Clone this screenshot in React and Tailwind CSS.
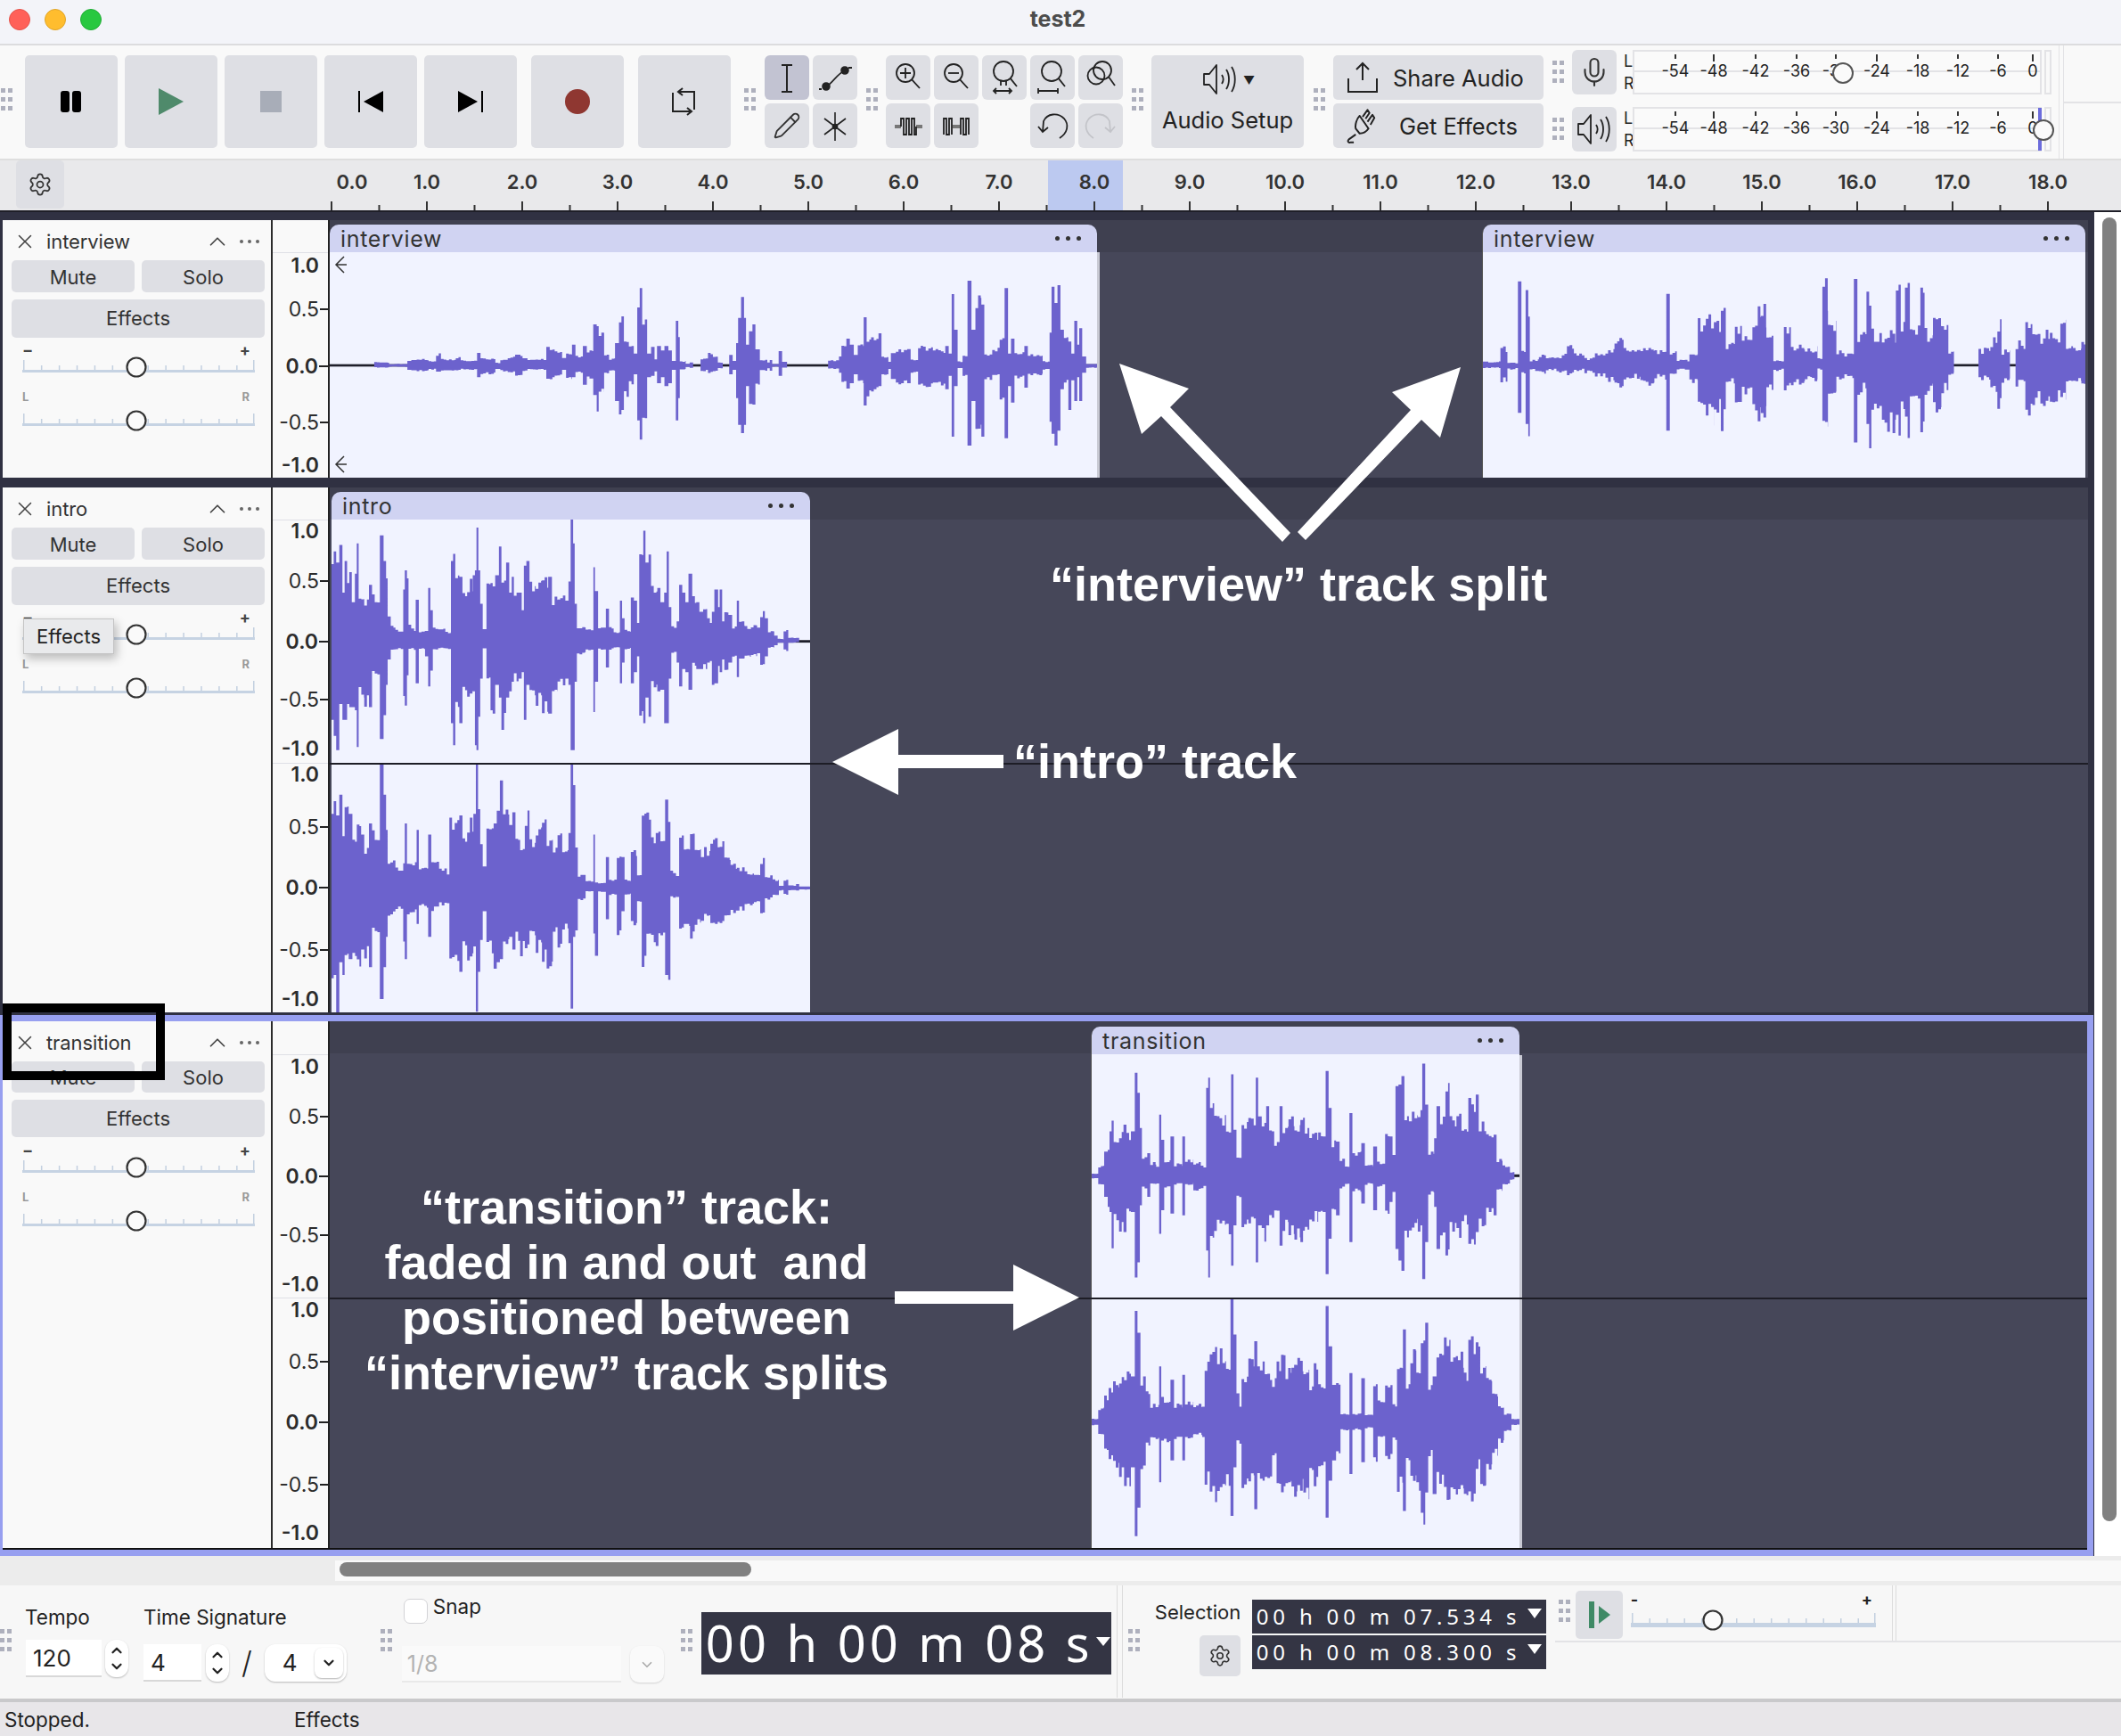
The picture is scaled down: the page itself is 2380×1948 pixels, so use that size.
import { X, ChevronUp, ChevronDown, Settings, Mic, Pencil } from "lucide-react";

// peaks are "x,top,bottom" per step, in the coordinates of the channel's viewBox
const WAVE_INTERVIEW_A = `0,358,362 90,348,368 120,355,365 157,345,375 165,338,380 200,345,375 215,318,385 225,338,378 255,330,378 265,343,375 298,318,400 305,335,390 335,350,372 345,340,380 360,330,385 375,320,395 390,335,380 400,338,375 438,298,405 445,295,408 455,310,395 470,335,375 478,315,410 490,290,400 497,325,385 512,295,425 520,305,405 533,222,460 540,228,515 544,240,460 555,320,390 565,335,380 577,285,480 585,215,525 590,195,510 595,260,470 605,290,430 615,320,390 622,165,545 627,100,610 632,180,545 642,320,400 650,298,395 657,340,380 662,295,420 670,310,400 677,295,430 685,310,420 692,345,375 700,210,545 705,265,470 708,345,375 720,355,365 728,350,368 735,358,362 750,335,380 765,318,388 775,330,380 785,350,370 795,358,362 808,325,390 815,345,375 822,285,470 826,200,560 832,130,588 838,200,560 842,290,430 848,245,490 855,222,492 861,300,425 870,340,378 885,350,370 890,342,378 895,355,365 908,312,395 915,345,368 925,358,362 1008,342,372 1030,330,385 1035,285,420 1045,270,438 1052,290,420 1060,325,390 1068,280,420 1080,198,495 1086,270,465 1095,255,450 1110,252,430 1116,330,395 1130,348,372 1135,310,410 1145,305,425 1168,305,420 1175,340,385 1190,288,425 1200,295,438 1220,305,430 1245,295,440 1252,320,395 1258,120,600 1263,240,430 1270,345,370 1280,325,400 1290,75,630 1298,240,480 1306,115,610 1318,155,600 1324,320,410 1340,300,395 1355,250,490 1365,100,605 1372,320,430 1378,270,485 1385,315,405 1405,295,435 1412,320,395 1430,320,395 1442,345,375 1456,250,550 1460,95,590 1466,150,630 1472,90,580 1478,240,440 1485,265,420 1494,280,510 1500,320,410 1506,210,480 1512,290,400 1516,235,480 1522,330,385 1530,355,368`;

const WAVE_INTERVIEW_B = `655,525,550 680,470,598 690,530,555 705,258,700 710,490,570 716,285,795 722,520,560 735,495,570 745,510,560 760,500,565 775,470,575 785,500,560 800,510,570 815,495,580 830,485,600 843,450,620 850,410,645 856,478,590 880,480,610 900,485,590 917,300,760 922,490,570 932,520,555 950,490,620 962,360,745 985,380,700 995,300,765 1002,460,610 1015,390,680 1025,430,650 1040,335,745 1052,325,730 1060,440,650 1070,520,560 1085,405,640 1095,465,610 1115,480,590 1125,470,600 1133,515,555 1140,225,835 1148,390,640 1160,490,590 1185,250,800 1190,420,640 1203,258,825 1210,415,690 1225,420,780 1245,250,820 1252,350,690 1258,235,790 1265,390,660 1280,235,825 1286,410,640 1298,355,710 1310,400,640 1320,490,580 1328,536,544 1363,480,590 1380,440,640 1390,355,705 1396,480,600 1408,536,544 1416,455,620 1430,345,730 1440,420,680 1465,420,665 1480,385,670 1488,460,600 1498,480,610 1510,460,625`;

const WAVE_INTRO_L = `5,150,640 12,110,690 20,145,735 30,90,590 40,240,640 47,140,640 55,210,590 62,175,600 70,270,600 80,180,610 86,85,725 92,230,580 110,260,600 125,215,600 135,240,515 160,60,700 172,140,625 180,195,530 185,315,450 195,340,420 210,355,420 235,230,565 240,170,595 247,195,500 252,340,420 270,360,420 275,262,525 285,360,420 305,360,440 315,225,535 322,295,485 330,345,420 355,345,415 370,360,420 388,140,650 395,118,720 402,160,620 415,190,650 425,215,575 440,195,575 458,185,550 465,170,720 470,35,735 476,170,630 482,275,510 490,355,415 502,200,540 515,210,610 522,220,620 530,185,530 542,95,570 550,150,675 565,145,570 575,240,550 583,190,520 590,230,520 605,240,510 615,295,490 622,155,640 630,140,530 640,200,590 660,195,600 680,180,620 700,190,620 712,245,560 730,240,540 755,265,510 765,205,530 772,10,735 780,85,735 785,275,520 792,340,435 820,355,425 845,160,615 850,235,520 860,345,420 885,290,475 895,345,420 910,360,415 930,265,525 937,320,460 945,355,420 965,255,525 975,265,490 985,335,440 992,110,635 1005,45,650 1012,145,570 1022,120,630 1030,210,540 1050,225,550 1060,270,545 1072,240,650 1080,110,650 1087,285,510 1095,340,430 1112,330,460 1120,215,535 1130,240,480 1140,270,490 1150,180,545 1162,235,480 1175,270,480 1185,300,480 1197,265,480 1210,320,460 1225,300,530 1233,230,525 1245,285,470 1250,230,490 1258,330,450 1265,290,490 1278,310,460 1290,340,450 1305,265,505 1312,330,450 1330,345,445 1350,335,440 1370,350,430 1380,295,480 1395,320,440 1405,360,415 1425,375,405 1436,385,398 1455,355,425 1470,380,398 1495,382,395 1505,390,394`;

const WAVE_INTRO_R = `5,935,1450 12,895,1440 20,940,1557 30,875,1400 40,1005,1440 47,905,1400 60,935,1390 72,1015,1390 86,950,1415 100,1000,1360 110,1040,1390 125,965,1415 135,980,1330 160,780,1515 172,875,1415 180,985,1320 185,1070,1255 210,1100,1240 235,1090,1335 240,965,1390 247,1080,1250 278,985,1280 285,1100,1230 315,1000,1320 325,1070,1240 350,1100,1225 375,1125,1215 383,940,1400 400,920,1435 415,940,1430 425,985,1380 440,945,1405 460,935,1350 468,780,1555 475,920,1430 482,1030,1330 490,1100,1240 502,970,1380 525,965,1420 535,925,1400 545,830,1390 555,895,1370 575,970,1320 585,930,1360 595,975,1340 610,1015,1385 625,915,1385 640,1010,1340 660,970,1375 680,940,1400 695,995,1435 715,1040,1310 730,975,1385 745,1040,1310 765,995,1340 772,780,1545 780,845,1320 787,1040,1300 795,1125,1210 820,1145,1180 845,1000,1310 850,1150,1380 860,1150,1180 885,1070,1265 895,1140,1190 920,1045,1320 935,1070,1240 945,1140,1190 965,1045,1300 985,1125,1210 1000,930,1425 1015,910,1320 1030,1000,1340 1045,970,1350 1060,1015,1350 1075,890,1440 1085,960,1455 1092,1110,1200 1110,1130,1195 1120,1000,1310 1135,1020,1290 1155,960,1330 1170,1015,1290 1190,1070,1270 1200,1035,1260 1220,1015,1300 1235,1000,1300 1250,1020,1280 1265,1060,1260 1285,1090,1250 1305,1100,1240 1330,1115,1225 1360,1120,1215 1380,1070,1260 1395,1125,1205 1420,1140,1190 1440,1160,1175 1455,1140,1190 1470,1158,1175 1495,1155,1175 1505,1162,1172`;

const WAVE_TRANSITION_L = `18,445,460 40,420,480 60,380,515 72,375,545 78,320,560 85,288,668 92,330,600 110,320,620 125,300,620 135,320,580 150,320,560 163,145,755 172,205,710 180,310,540 187,395,490 205,385,515 215,410,480 235,425,475 245,270,625 252,345,555 262,400,490 283,335,565 295,415,480 323,335,570 332,400,480 360,410,500 385,420,490 403,190,675 410,160,755 416,205,685 430,270,620 470,290,640 487,150,720 495,315,600 505,385,520 522,280,615 545,265,600 570,160,710 578,275,600 590,285,650 605,245,600 615,300,600 632,335,560 650,245,660 660,300,620 680,265,630 700,290,650 720,260,660 735,290,640 750,315,590 780,320,570 795,335,560 805,140,745 815,250,640 825,345,570 840,350,570 852,400,490 870,420,480 885,265,650 895,380,500 925,355,535 937,415,480 965,365,555 978,410,485 1005,320,575 1020,335,530 1030,390,500 1040,185,670 1050,180,705 1060,155,735 1070,250,640 1085,290,615 1095,240,610 1115,250,625 1130,118,760 1140,240,650 1150,380,510 1170,340,545 1178,245,670 1190,260,630 1208,165,700 1222,260,630 1245,260,655 1262,310,600 1285,220,655 1295,225,700 1310,210,620 1320,320,580 1330,290,625 1345,315,570 1370,330,570 1380,400,500 1400,420,480 1425,440,465 1440,449,456`;

const WAVE_TRANSITION_R = `18,1175,1195 40,1140,1225 60,1105,1275 75,1080,1310 90,1060,1335 110,1050,1350 127,1025,1390 150,1050,1320 163,855,1525 172,920,1440 182,1050,1340 200,1090,1260 215,1130,1240 245,1020,1365 252,1110,1250 283,1060,1300 295,1130,1240 323,1045,1300 332,1120,1235 360,1130,1225 390,1140,1230 398,1000,1375 415,930,1430 440,965,1400 470,990,1390 485,820,1465 495,925,1320 505,1100,1240 515,1140,1250 522,1040,1395 545,980,1370 565,945,1445 575,1000,1360 600,1025,1385 625,1050,1300 640,1000,1420 655,960,1400 670,1020,1380 690,1000,1410 710,990,1400 730,1020,1430 750,1070,1330 765,1010,1395 780,1070,1330 805,840,1470 815,960,1360 827,1075,1300 840,1065,1290 855,1160,1210 885,1040,1340 895,1160,1210 925,1055,1305 937,1160,1205 965,1070,1320 980,1110,1240 1005,1070,1305 1030,1130,1240 1045,1005,1395 1065,910,1450 1075,1055,1320 1090,960,1390 1110,995,1390 1125,885,1510 1140,890,1395 1150,1075,1290 1165,1050,1400 1178,980,1380 1203,915,1420 1225,960,1410 1250,975,1390 1270,1025,1430 1285,925,1435 1310,940,1330 1325,1010,1390 1345,1040,1340 1365,1100,1290 1385,1135,1250 1405,1160,1215 1430,1175,1195`;

const noise = (n) => {
    const s = Math.sin(n * 12.9898) * 43758.5453;
    return s - Math.floor(s);
};

const Wave = ({ data, box, w, h, center, line, rough = 0.24 }) => {
    const pts = data.split(" ").map((p) => p.split(",").map(Number));
    const step = (box[2] / w) * 3;
    let d = "";
    pts.forEach(([x, t, b], i) => {
        const next = i < pts.length - 1 ? pts[i + 1][0] : box[0] + box[2];
        if (b - t <= 8) return;
        if (next - x <= step * 1.5) {
            d += `M${x} ${t}H${next}V${b}H${x}Z`;
            return;
        }
        // wide steps get broken up so the edge stays jagged
        for (let xx = x, k = 1; xx < next; xx += step, k++) {
            const x2 = Math.min(xx + step, next);
            const tt = t + noise(k + x) * (center - t) * rough;
            const bb = b - noise(k * 1.7 + x) * (b - center) * rough;
            d += `M${xx} ${tt}H${x2}V${bb}H${xx}Z`;
        }
    });
    return (
        <svg width={w} height={h} viewBox={box.join(" ")} preserveAspectRatio="none" className="block">
            {line && <rect x={box[0]} y={center - 4} width={box[2]} height="8" fill="#1e1e2a" />}
            <path d={d} fill="#6c62cd" />
        </svg>
    );
};

const Grip = ({ className = "" }) => (
    <div className={`grid grid-cols-2 gap-x-[3px] gap-y-[5px] w-[13px] shrink-0 ${className}`}>
        {[0, 1, 2, 3, 4, 5].map((i) => <span key={i} className="w-[5px] h-[5px] bg-[#aeb0bd]" />)}
    </div>
);

const Btn = ({ className = "", children }) => (
    <div className={`flex items-center justify-center rounded-[5px] bg-[#dedfe4] shrink-0 ${className}`}>{children}</div>
);

const Big = ({ children }) => <Btn className="w-[104px] h-[104px]">{children}</Btn>;
const Small = ({ children, className = "bg-[#dedfe4]" }) => (
    <div className={`flex items-center justify-center rounded-[6px] w-[50px] h-[50px] ${className}`}>{children}</div>
);

const Ico = ({ children, w = 50, h = 50, stroke = "#222", sw = 2 }) => (
    <svg width={w} height={h} viewBox={`0 0 ${w} ${h}`} fill="none" stroke={stroke} strokeWidth={sw}>{children}</svg>
);

const Mag = ({ children, cx = 22, cy = 20, r = 10, hx = 38, hy = 37 }) => (
    <Ico sw={1.8}>
        <circle cx={cx} cy={cy} r={r} />
        <path d={`M${cx + r * 0.7} ${cy + r * 0.72}L${hx} ${hy}`} />
        {children}
    </Ico>
);

const Speaker = () => (
    <Ico w={44} h={44} sw={1.8}>
        <path d="M4 16h6l8-10v32l-8-10H4z" strokeLinejoin="round" />
        <path d="M24 17c2 3 2 7 0 10M29 11c4 6 4 16 0 22M35 8c5 8 5 20 0 28" />
    </Ico>
);

const Dots = ({ className = "gap-[5px]", dot = "w-[4px] h-[4px] bg-[#666]" }) => (
    <div className={`flex items-center ${className}`}>
        <span className={`rounded-full ${dot}`} />
        <span className={`rounded-full ${dot}`} />
        <span className={`rounded-full ${dot}`} />
    </div>
);

const RULER_LABELS = Array.from({ length: 19 }, (_, i) => i);

const Ruler = () => (
    <div className="relative h-[58px] shrink-0 bg-[#e9e9eb] border-t-2 border-[#dedede]">
        <div className="absolute left-[1176px] w-[84px] top-0 h-[56px] bg-[#bcc9f0]" />
        <Btn className="absolute left-[18px] top-0 w-[54px] h-[54px]">
            <Settings size={28} strokeWidth={1.5} color="#333" />
        </Btn>
        {RULER_LABELS.map((i) => (
            <span key={i} style={{ left: i === 0 ? 395 : 372 + i * 107 }} className="absolute top-[10px] -translate-x-1/2 text-[22px] leading-[28px] font-semibold text-[#333]">
                {i}.0
            </span>
        ))}
        <svg width="2380" height="56" className="absolute left-0 top-0">
            {Array.from({ length: 37 }, (_, i) => i).map((i) => (
                <rect key={i} x={371 + i * 53.5} y={i % 2 ? 50 : 46} width="2" height={i % 2 ? 6 : 10} fill="#333" />
            ))}
        </svg>
    </div>
);

const Slider = ({ w = 261, x = 128, ticks = 14, track = 3 }) => (
    <svg width={w} height="26" className="block">
        {Array.from({ length: ticks }, (_, i) => i).map((i) => {
            const end = i === 0 || i === ticks - 1;
            return <rect key={i} x={Math.min(1 + (i * (w - 2)) / (ticks - 1), w - 2)} y={end ? 5 : 11} width="1.500" height={end ? 11 : 5} fill="#c3d0e0" />;
        })}
        <rect x="0" y={16} width={w} height={track} fill="#c6d3e3" />
        <circle cx={x} cy="13" r="10.500" fill="#fafafa" stroke="#333" strokeWidth="2.200" />
    </svg>
);

const Panel = ({ name, effectsActive, tooltip, muteH = "h-[36px]", effectsH = "h-[43px]", mt = "mt-[7px]" }) => (
    <div className="relative w-[303px] shrink-0 h-full bg-[#f9f9f9] border-r-2 border-[#2b2b2b] text-[22px] text-[#333]">
        <div className="flex items-center h-[45px] pt-[3px] pl-[12px] pr-[13px]">
            <X size={26} strokeWidth={1.4} color="#444" />
            <span className="ml-[11px] text-[22px] tracking-[-0.1px] text-[#333]">{name}</span>
            <ChevronUp size={30} strokeWidth={1.4} color="#444" className="ml-auto mr-[10px]" />
            <Dots />
        </div>
        <div className="flex gap-[8px] px-[10px]">
            <Btn className={`w-[138px] pt-[2px] ${muteH}`}>Mute</Btn>
            <Btn className={`w-[138px] pt-[2px] ${muteH}`}>Solo</Btn>
        </div>
        <Btn className={`mx-[10px] mt-[8px] w-[284px] ${effectsH} ${effectsActive ? "bg-[#cdcdd4]" : ""}`}>Effects</Btn>
        <div className={`${mt} ml-[22px] w-[261px]`}>
            <div className="flex justify-between h-[13px] pr-[5px] text-[18px] leading-[14px] font-bold text-[#444]"><span>−</span><span>+</span></div>
            <div className="mt-[0px]"><Slider /></div>
            <div className="flex justify-between h-[14px] pr-[6px] mt-[13px] text-[13px] leading-[14px] font-bold text-[#999]"><span>L</span><span>R</span></div>
            <div className="mt-[7px]"><Slider /></div>
        </div>
        {tooltip && (
            <div className="absolute left-[23px] top-[147px] w-[102px] h-[40px] flex items-center justify-center bg-[#e9eaec] border border-[#c4c4c4] text-[22px] text-[#222] shadow-[3px_5px_10px_rgba(0,0,0,0.25)]">
                Effects
            </div>
        )}
    </div>
);

const Axis = ({ marks, lines = [] }) => (
    <div className="relative w-[64px] shrink-0 h-full bg-[#f9f9f9] border-r-2 border-[#222]">
        {lines.map((y) => <div key={y} style={{ top: y }} className="absolute left-0 right-0 h-[1px] bg-[#dfe0e6]" />)}
        {marks.map(([label, y]) => {
            const strong = label === "1.0" || label === "0.0" || label === "-1.0";
            return (
                <div key={`${label}${y}`} style={{ top: y - 14 }} className="absolute right-0 flex items-center h-[28px]">
                    <span className={`text-[23px] text-[#2c2c2c] ${strong ? "font-semibold" : ""}`}>{label}</span>
                    <span className={`ml-[1px] h-[2px] bg-[#222] ${label === "0.0" ? "w-[10px]" : "w-[9px]"} ${label === "0.5" || label === "-0.5" || label === "0.0" ? "" : "invisible"}`} />
                </div>
            );
        })}
    </div>
);

const Clip = ({ name, className = "", children }) => (
    <div className={`relative flex flex-col shrink-0 rounded-t-[10px] overflow-hidden h-full ${className}`}>
        <div className="flex items-center justify-between h-[31px] shrink-0 bg-[#d0d3f2] pl-[12px]">
            <span className="text-[25px] tracking-[0.7px] leading-[30px] pt-[1px] text-[#333]">{name}</span>
            <Dots className="gap-[7px] mr-[18px]" dot="w-[5px] h-[5px] bg-[#333]" />
        </div>
        <div className="flex-1 bg-[#f1f3ff]">{children}</div>
    </div>
);

const Lane = ({ mid, pad = "pt-[5px]", children }) => (
    <div className={`relative flex-1 h-full flex ${pad} bg-[linear-gradient(#3f4050_36px,#464759_36px)] overflow-hidden`}>
        {children}
        {mid && <div className={`absolute left-0 right-0 h-[2px] bg-[#1d1d26] ${mid}`} />}
    </div>
);

const EdgeArrow = ({ className }) => (
    <svg width="16" height="20" viewBox="0 0 16 20" fill="none" stroke="#333" strokeWidth="1.500" className={`absolute left-[4px] ${className}`}>
        <path d="M12 1 3 10l9 9M3 10h12" />
    </svg>
);

const T1_MARKS = [["1.0", 51], ["0.5", 100], ["0.0", 164], ["-0.5", 227], ["-1.0", 275]];
const T2_MARKS = [["1.0", 49], ["0.5", 105], ["0.0", 173], ["-0.5", 238], ["-1.0", 293], ["1.0", 322], ["0.5", 381], ["0.0", 449], ["-0.5", 519], ["-1.0", 574]];
const T3_MARKS = [["1.0", 51], ["0.5", 107], ["0.0", 174], ["-0.5", 240], ["-1.0", 295], ["1.0", 324], ["0.5", 382], ["0.0", 450], ["-0.5", 520], ["-1.0", 574]];

const Tracks = () => (
    <div className="flex h-[1510px] shrink-0 bg-[#303142] border-t-2 border-[#1f1f28]">
        <div className="w-[2350px] pt-[9px]">
            <div className="ml-[3px] w-[2340px] h-[289px] flex">
                <Panel name="interview" />
                <Axis marks={T1_MARKS} lines={[36]} />
                <Lane>
                    <Clip name="interview" className="w-[861px]">
                        <Wave data={WAVE_INTERVIEW_A} box={[0, -21, 1552, 759]} w={861} h={253} center={360} line />
                        <EdgeArrow className="top-[35px]" />
                        <EdgeArrow className="top-[259px]" />
                    </Clip>
                    <div className="w-[3px] mt-[31px] bg-[#c9cad4] shrink-0" />
                    <Clip name="interview" className="w-[677px] ml-[429px] border-l border-[#555]">
                        <Wave data={WAVE_INTERVIEW_B} box={[655, 160, 862, 758]} w={677} h={253} center={540} line rough={0.42} />
                    </Clip>
                </Lane>
            </div>
            <div className="ml-[3px] mt-[11px] w-[2340px] h-[589px] flex">
                <Panel name="intro" effectsActive tooltip />
                <Axis marks={T2_MARKS} lines={[36, 309]} />
                <Lane mid="top-[309px]">
                    <Clip name="intro" className="w-[537px] ml-[2px]">
                        <Wave data={WAVE_INTRO_L} box={[5, 10, 1535, 765]} w={537} h={273} center={393} line />
                        <Wave data={WAVE_INTRO_R} box={[5, 775, 1535, 782]} w={537} h={280} center={1167} />
                    </Clip>
                </Lane>
            </div>
            <div className="mt-[3px] w-[2349px] h-[607px] border-t-[7px] border-b-[7px] border-l-[3px] border-r-[7px] border-[#979ff0]">
                <div className="flex h-[593px] border-b-2 border-[#111]">
                    <Panel name="transition" muteH="h-[35px]" effectsH="h-[42px]" mt="mt-[8px]" />
                    <Axis marks={T3_MARKS} lines={[37, 310]} />
                    <Lane mid="top-[310px]" pad="pt-[6px]">
                        <Clip name="transition" className="w-[481px] ml-[854px] border-l border-[#555]">
                            <Wave data={WAVE_TRANSITION_L} box={[18, 90, 1442, 725]} w={481} h={273} center={452} line />
                            <Wave data={WAVE_TRANSITION_R} box={[18, 815, 1442, 740]} w={481} h={279} center={1185} />
                        </Clip>
                        <div className="w-[3px] mt-[32px] bg-[#c9cad4] shrink-0" />
                    </Lane>
                </div>
            </div>
        </div>
        <div className="flex-1 bg-white pt-[6px] pl-[9px]">
            <div className="w-[16px] h-[1463px] rounded-full bg-[#808080]" />
        </div>
    </div>
);

const METER_LABELS = [["-54", 48], ["-48", 91], ["-42", 138], ["-36", 184], ["-30", 228], ["-24", 274], ["-18", 320], ["-12", 365], ["-6", 410], ["0", 449]];

const Meter = ({ icon, thumb, level }) => (
    <div className="flex items-center h-[50px]">
        <Small>{icon}</Small>
        <div className="flex flex-col justify-center w-[10px] ml-[8px] text-[18px] leading-[25px] text-[#222]"><span>L</span><span>R</span></div>
        <div className="relative w-[459px] h-[50px] border-2 border-[#e3e3e6] bg-[#fafafa]">
            <div className="absolute left-0 right-0 top-[21px] h-[2px] bg-[#e3e3e6]" />
            {level && <div className="absolute left-[453px] -top-[1px] -bottom-[1px] w-[4px] bg-[#6c6cdc]" />}
            {METER_LABELS.map(([label, x]) => (
                <div key={label} style={{ left: x - 22 }} className="absolute top-[3px] w-[40px] flex flex-col items-center">
                    <span className={`w-[1.5px] bg-[#333] ${label === "-48" || label === "-24" || label === "0" ? "h-[8px]" : "h-[5px]"}`} />
                </div>
            ))}
            {METER_LABELS.map(([label, x]) => (
                <span key={label} style={{ left: x - 22 }} className="absolute top-[10px] w-[40px] text-center text-[18px] leading-[24px] text-[#222]">{label}</span>
            ))}
            <div className={`absolute top-[12px] w-[24px] h-[24px] rounded-full border-[2.5px] border-[#555] bg-[#fafafa] ${thumb}`} />
        </div>
        <div className="w-[8px] h-[50px] ml-[3px] border-2 border-[#e3e3e6]" />
    </div>
);

const Toolbar = () => (
    <div className="relative flex items-start h-[127px] shrink-0 pt-[11px] bg-[#f9f9f9] text-[#222]">
        <Grip className="mt-[37px] ml-[1px]" />
        <div className="flex gap-[8px] ml-[14px]">
            <Big>
                <svg width="24" height="24" viewBox="0 0 24 24" fill="#000"><rect x="0" width="10" height="24" rx="3" /><rect x="13" width="10" height="24" rx="3" /></svg>
            </Big>
            <Big>
                <svg width="28" height="30" viewBox="0 0 28 30" fill="#4f8a6b"><path d="M0 0 28 15 0 30z" /></svg>
            </Big>
            <Big><span className="block w-[24px] h-[24px] bg-[#a8adb8]" /></Big>
            <Big>
                <svg width="28" height="24" viewBox="0 0 28 24" fill="#000"><rect width="2" height="24" /><path d="M28 0v24L6 12z" /></svg>
            </Big>
            <Big>
                <svg width="28" height="24" viewBox="0 0 28 24" fill="#000"><rect x="26" width="2" height="24" /><path d="M0 0v24l22-12z" /></svg>
            </Big>
            <div className="ml-[8px]">
                <Big><span className="block w-[28px] h-[28px] rounded-full bg-[#8f3731]" /></Big>
            </div>
            <div className="ml-[8px]">
                <Big>
                    <svg width="32" height="34" viewBox="0 0 32 34" fill="none" stroke="#222" strokeWidth="2"><path d="M14 2 9 6l5 4M9 6h18v20M3 7v21h21M19 24l5 4-5 4" /></svg>
                </Big>
            </div>
        </div>
        <Grip className="mt-[37px] ml-[15px]" />
        <div className="grid grid-cols-2 gap-x-[4px] gap-y-[4px] ml-[10px]">
            <Small className="bg-[#c2c3d2]">
                <Ico sw={2}><path d="M19 11h12M25 11v30M19 41h12" /></Ico>
            </Small>
            <Small>
                <Ico sw={1.6}><path d="M15 35C22 32 26 22 36 17" /><circle cx="15" cy="35" r="4" fill="#222" /><circle cx="36" cy="17" r="4" fill="#222" /><path d="M40 14h4M10 38h-3" strokeWidth="2" /></Ico>
            </Small>
            <Small><Pencil size={32} strokeWidth={1.4} color="#333" /></Small>
            <Small>
                <Ico sw={1.6}><path d="M25 10v32M13 17l24 18M37 17 13 35" /><circle cx="25" cy="26" r="2.500" fill="#222" /></Ico>
            </Small>
        </div>
        <Grip className="mt-[37px] ml-[10px]" />
        <div className="ml-[9px] grid grid-cols-5 gap-x-[4px] gap-y-[4px]">
            <Small><Mag><path d="M22 14v12M16 20h12" /></Mag></Small>
            <Small><Mag><path d="M16 20h12" /></Mag></Small>
            <Small><Mag cx={24} cy={18} r={11} hx={39} hy={35}><path d="M13 40h20M16 37l-3 3 3 3M30 37l3 3-3 3M21 29v5M27 29v5" /></Mag></Small>
            <Small><Mag cx={24} cy={18} r={11} hx={39} hy={35}><path d="M9 37v6M31 37v6M9 40h22" /></Mag></Small>
            <Small><Mag cx={27} cy={17} r={10} hx={41} hy={34}><circle cx="20" cy="23" r="9.500" /></Mag></Small>
            <Small>
                <Ico sw={1.8}><path d="M10 26h7M34 26h7" strokeWidth="4" stroke="#777" /><path d="M17 26v-9h3v18h3V17h3v18h3V17h3v18h2v-9" /></Ico>
            </Small>
            <Small>
                <Ico sw={1.8}><path d="M21 26h8" strokeWidth="4" stroke="#777" /><path d="M11 35V17h3v18h3V17h3v18M30 35V17h3v18h3V17h3v18" /></Ico>
            </Small>
            <span />
            <Small>
                <Ico sw={1.8}><path d="M33 39C42 33 44 24 38 17 31 10 19 11 15 20L14 32M9 26l5 6 6-5" /></Ico>
            </Small>
            <Small>
                <Ico sw={1.8} stroke="#c3c4c9"><path d="M17 39C8 33 6 24 12 17 19 10 31 11 35 20L36 32M41 26l-5 6-6-5" /></Ico>
            </Small>
        </div>
        <Grip className="mt-[37px] ml-[10px]" />
        <Btn className="ml-[9px] w-[171px] h-[104px] flex-col">
            <div className="flex items-center gap-[4px] -mt-[11px]">
                <Speaker />
                <span className="text-[13px] leading-none mt-[2px]">▼</span>
            </div>
            <span className="text-[25.500px] leading-[30px] mt-[9px]">Audio Setup</span>
        </Btn>
        <Grip className="mt-[37px] ml-[11px]" />
        <div className="ml-[9px] flex flex-col gap-[4px]">
            <Btn className="w-[236px] h-[50px] justify-start pl-[14px] text-[25.500px]">
                <svg width="38" height="38" viewBox="0 0 38 38" fill="none" stroke="#222" strokeWidth="2"><path d="M19 22V3M12 10l7-7 7 7M3 20v15h32V20" /></svg>
                <span className="ml-[15px] mt-[2px]">Share Audio</span>
            </Btn>
            <Btn className="w-[236px] h-[50px] justify-start pl-[12px] text-[25.500px]">
                <svg width="42" height="44" viewBox="0 0 38 40" fill="none" stroke="#222" strokeWidth="1.800" strokeLinejoin="round"><path d="M16 10l9 13c-2 3-5 5-9 5l-4-5c-1-4 1-10 4-13zM19 11l5-7 2 3-4 6M24 16l5-7 2 3-4 7M12 29 5 34c-2 2 0 4 2 3h3" /></svg>
                <span className="ml-[20px] mt-[2px]">Get Effects</span>
            </Btn>
        </div>
        <div className="flex flex-col gap-[39px] ml-[10px] mt-[6px]">
            <Grip />
            <Grip />
        </div>
        <div className="ml-[9px] -mt-[6px] flex flex-col gap-[14px]">
            <Meter icon={<Mic size={36} strokeWidth={1.4} color="#333" />} thumb="left-[222px]" />
            <Meter icon={<Speaker />} thumb="left-[447px]" level />
        </div>
        <div className="absolute left-[2310px] top-0 bottom-0 w-[6px] border-x border-[#e3e3e6]" />
        <div className="absolute left-[2316px] right-0 top-[63px] h-[2px] bg-[#e3e3e6]" />
    </div>
);

const TimeBox = ({ value }) => (
    <div className="relative w-[330px] h-[38px] bg-[#343544] text-white text-[24px] leading-[38px] tracking-[4.800px] pl-[5px] font-['Noto_Sans',sans-serif] whitespace-pre">
        {value}
        <span className="absolute right-[5px] top-[10px] w-0 h-0 border-x-[8px] border-x-transparent border-t-[11px] border-t-white" />
    </div>
);

const Spin = () => (
    <div className="flex flex-col items-center justify-center w-[26px] h-[42px] bg-white rounded-[12px] shadow-[0_1px_2px_rgba(0,0,0,0.25)] text-[#222] shrink-0">
        <ChevronUp size={18} strokeWidth={3} />
        <ChevronDown size={18} strokeWidth={3} />
    </div>
);

const Bottom = () => (
    <div className="relative flex items-start h-[131px] shrink-0 bg-[#f7f7f7] border-b-4 border-[#c9c9cb] text-[22.500px] text-[#222]">
        <Grip className="mt-[49px]" />
        <div className="ml-[15px] mt-[25px] w-[133px]">
            <div className="h-[22px] leading-[22px]">Tempo</div>
            <div className="flex mt-[14px]">
                <div className="w-[85px] h-[42px] ml-[1px] pl-[8px] leading-[42px] bg-white border-b-2 border-[#d8d8d8] text-[26px]">120</div>
                <div className="ml-[4px]"><Spin /></div>
            </div>
        </div>
        <div className="mt-[25px]">
            <div className="h-[22px] leading-[22px] whitespace-nowrap">Time Signature</div>
            <div className="flex items-center mt-[14px]">
                <div className="w-[65px] h-[42px] pl-[8px] leading-[42px] bg-white border-b-2 border-[#d8d8d8] text-[26px]">4</div>
                <div className="ml-[5px]"><Spin /></div>
                <span className="ml-[14px] text-[34px] font-light">/</span>
                <div className="ml-[14px] flex items-center justify-between w-[92px] h-[42px] pl-[20px] pr-[4px] bg-white rounded-[12px] shadow-[0_1px_2px_rgba(0,0,0,0.25)] text-[26px]">
                    4
                    <div className="flex items-center justify-center w-[32px] h-[34px] rounded-[8px] shadow-[0_1px_2px_rgba(0,0,0,0.3)]">
                        <ChevronDown size={18} strokeWidth={3} />
                    </div>
                </div>
            </div>
        </div>
        <Grip className="mt-[49px] ml-[38px]" />
        <div className="ml-[11px] mt-[15px] w-[294px]">
            <div className="flex items-start ml-[2px]">
                <div className="w-[27px] h-[28px] rounded-[7px] bg-white border border-[#d3d3d6]" />
                <span className="ml-[6px] -mt-[2px] leading-[22px]">Snap</span>
            </div>
            <div className="flex mt-[25px]">
                <div className="w-[246px] h-[41px] pl-[6px] leading-[41px] bg-[#fafafa] border-b-2 border-[#e9e9e9] text-[25px] text-[#b3b3b3]">1/8</div>
                <div className="ml-[10px] w-[38px] h-[41px] flex items-center justify-center rounded-[10px] bg-[#fafafa] shadow-[0_1px_2px_rgba(0,0,0,0.15)] text-[#aaa]">
                    <ChevronDown size={18} strokeWidth={2.2} />
                </div>
            </div>
        </div>
        <Grip className="mt-[49px] ml-[19px]" />
        <div className="relative ml-[10px] mt-[30px] w-[460px] h-[70px] bg-[#343544] text-white text-[56px] leading-[68px] tracking-[4px] pl-[5px] font-['Noto_Sans',sans-serif] whitespace-pre">
            00 h 00 m 08 s
            <span className="absolute right-[1px] top-[28px] w-0 h-0 border-x-[8px] border-x-transparent border-t-[10px] border-t-white" />
        </div>
        <div className="ml-[6px] h-[126px] w-[7px] border-x border-[#dcdcdc]" />
        <Grip className="mt-[49px] ml-[6px]" />
        <div className="ml-[17px] mt-[19px] w-[96px] flex flex-col items-end">
            <span className="self-start leading-[22px] whitespace-nowrap text-[22px]">Selection</span>
            <Btn className="mt-[15px] w-[46px] h-[46px]"><Settings size={26} strokeWidth={1.5} color="#333" /></Btn>
        </div>
        <div className="ml-[13px] mt-[16px] flex flex-col gap-[2px]">
            <TimeBox value="00 h 00 m 07.534 s" />
            <TimeBox value="00 h 00 m 08.300 s" />
        </div>
        <Grip className="mt-[16px] ml-[14px]" />
        <Btn className="ml-[6px] mt-[6px] w-[53px] h-[54px]">
            <svg width="30" height="30" viewBox="0 0 30 30" fill="#3f8a66"><rect x="4" width="6" height="30" /><path d="M15 5 28 15 15 25z" /></svg>
        </Btn>
        <div className="ml-[9px] mt-[6px] w-[275px]">
            <div className="flex justify-between h-[20px] text-[18px] leading-[20px] font-bold"><span>-</span><span className="mr-[4px]">+</span></div>
            <Slider w={275} x={92} ticks={15} track={5} />
        </div>
        <div className="ml-[18px] h-[64px] w-[5px] border-x border-[#dcdcdc]" />
        <div className="absolute left-[1745px] right-0 top-[62px] h-[2px] bg-[#e3e3e6]" />
    </div>
);

export default function App() {
    return (
        <div className="relative w-[2380px] h-[1948px] overflow-hidden flex flex-col bg-[#f9f9f9] font-['Inter',sans-serif]">
            <div className="relative flex items-center justify-center h-[51px] shrink-0 bg-[#f3f4f9] border-b-2 border-[#dcdcde]">
                <div className="absolute left-[10px] top-[10px] flex gap-[16px]">
                    <span className="w-[24px] h-[24px] rounded-full bg-[#ff6159] border border-[#e5534b]" />
                    <span className="w-[24px] h-[24px] rounded-full bg-[#ffbd2e] border border-[#e0a528]" />
                    <span className="w-[24px] h-[24px] rounded-full bg-[#28c840] border border-[#22ad37]" />
                </div>
                <span className="text-[25px] font-bold text-[#4c4c4c] -mt-[6px] -ml-[6px]">test2</span>
            </div>
            <Toolbar />
            <Ruler />
            <Tracks />
            <div className="relative h-[33px] shrink-0 border-y-[5px] border-[#ececec] bg-[#f9f9f9]">
                <div className="absolute left-0 top-0 bottom-0 w-[376px] bg-[#ececec]" />
                <div className="absolute left-[381px] top-[2px] w-[462px] h-[16px] rounded-full bg-[#808080]" />
            </div>
            <Bottom />
            <div className="h-[38px] shrink-0 flex items-center pt-[2px] bg-[#e8e6e9] text-[22.500px] text-[#222]">
                <span className="ml-[5px] w-[325px]">Stopped.</span>
                <span>Effects</span>
            </div>

            {/* annotations drawn over the recording */}
            <svg width="2380" height="1948" className="absolute left-0 top-0 pointer-events-none" fill="#fff">
                <path d="M1256 408 1334 436 1313 457 1448 598 1439 608 1303 467 1281 487z" />
                <path d="M1639 412 1616 491 1595 471 1465 606 1456 597 1583 460 1562 440z" />
                <path d="M934 855 1008 818V847H1126V862H1008V892z" />
                <path d="M1211 1456 1137 1419V1449H1004V1463H1137V1493z" />
            </svg>
            <div className="absolute left-[1178px] top-[624px] whitespace-nowrap font-['Liberation_Sans',sans-serif] font-bold text-white text-[54px] leading-[62px]">“interview” track split</div>
            <div className="absolute left-[1137px] top-[823px] whitespace-nowrap font-['Liberation_Sans',sans-serif] font-bold text-white text-[54px] leading-[62px]">“intro” track</div>
            <div className="absolute left-[403px] w-[600px] top-[1323px] text-center font-['Liberation_Sans',sans-serif] font-bold text-white text-[54px] leading-[62px] whitespace-pre">
                {"“transition” track:\nfaded in and out  and\npositioned between\n“interview” track splits"}
            </div>
            <div className="absolute left-[3px] top-[1126px] w-[182px] h-[86px] border-[10px] border-black" />
        </div>
    );
}
